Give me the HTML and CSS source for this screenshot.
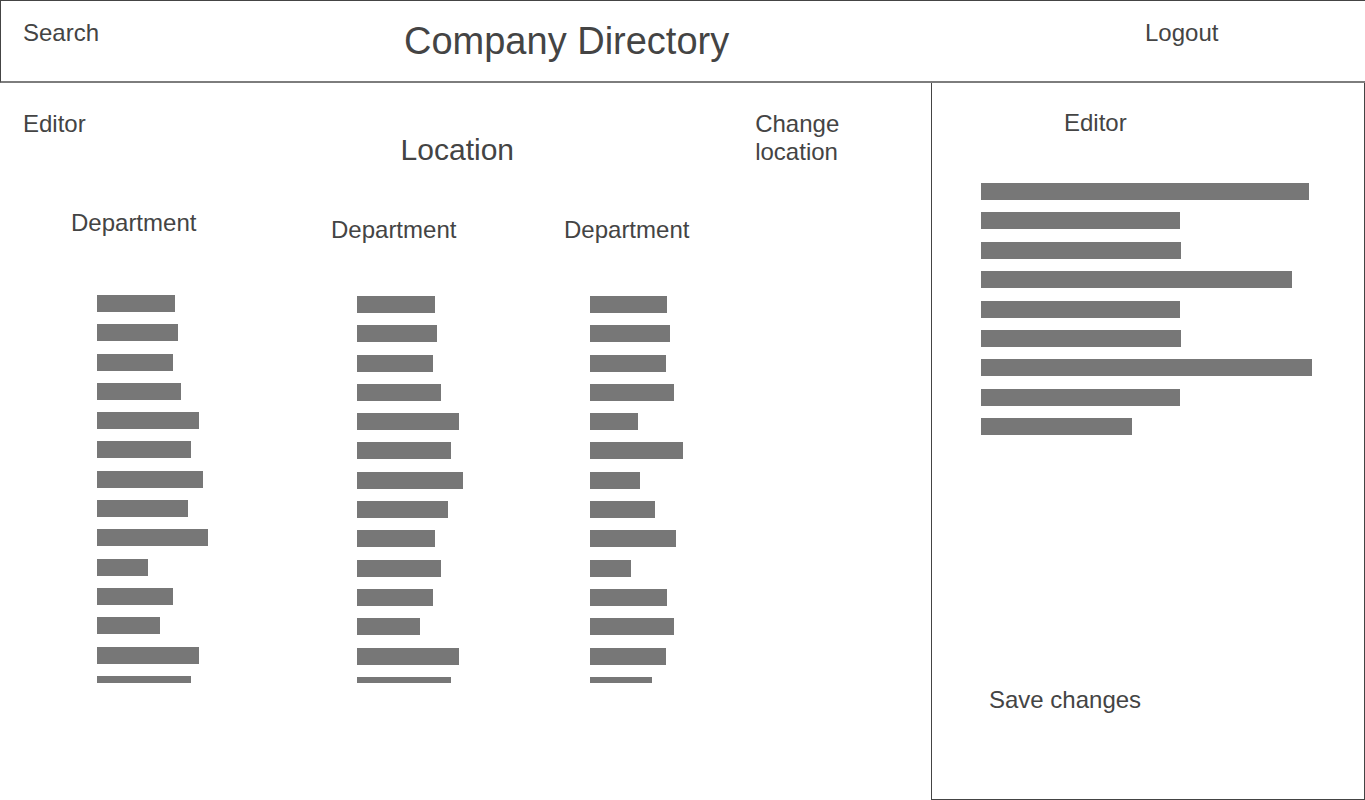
FILE: index.html
```html
<!DOCTYPE html>
<html lang="en">
<head>
<meta charset="utf-8">
<meta name="viewport" content="width=device-width, initial-scale=1">
<title>Company Directory</title>
<link rel="stylesheet" href="styles.css">
</head>
<body class="page">
<header class="topbar">
  <button class="action" type="button">Search</button>
  <h1 class="title">Company Directory</h1>
  <a class="action" href="#logout">Logout</a>
</header>
<div class="workspace">
  <main class="directory">
    <div class="location-bar">
      <button class="action" type="button">Editor</button>
      <h2 class="location">Location</h2>
      <button class="action action-wrap" type="button">Change location</button>
    </div>
    <div class="departments">
      <section class="department">
        <h3 class="department-name">Department</h3>
        <div class="people">
          <ul class="bars">
            <li class="bar" style="width:78px"></li>
            <li class="bar" style="width:81px"></li>
            <li class="bar" style="width:76px"></li>
            <li class="bar" style="width:84px"></li>
            <li class="bar" style="width:102px"></li>
            <li class="bar" style="width:94px"></li>
            <li class="bar" style="width:106px"></li>
            <li class="bar" style="width:91px"></li>
            <li class="bar" style="width:111px"></li>
            <li class="bar" style="width:51px"></li>
            <li class="bar" style="width:76px"></li>
            <li class="bar" style="width:63px"></li>
            <li class="bar" style="width:102px"></li>
            <li class="bar" style="width:94px"></li>
          </ul>
        </div>
      </section>
      <section class="department department-low">
        <h3 class="department-name">Department</h3>
        <div class="people">
          <ul class="bars">
            <li class="bar" style="width:78px"></li>
            <li class="bar" style="width:80px"></li>
            <li class="bar" style="width:76px"></li>
            <li class="bar" style="width:84px"></li>
            <li class="bar" style="width:102px"></li>
            <li class="bar" style="width:94px"></li>
            <li class="bar" style="width:106px"></li>
            <li class="bar" style="width:91px"></li>
            <li class="bar" style="width:78px"></li>
            <li class="bar" style="width:84px"></li>
            <li class="bar" style="width:76px"></li>
            <li class="bar" style="width:63px"></li>
            <li class="bar" style="width:102px"></li>
            <li class="bar" style="width:94px"></li>
          </ul>
        </div>
      </section>
      <section class="department department-low">
        <h3 class="department-name">Department</h3>
        <div class="people">
          <ul class="bars">
            <li class="bar" style="width:77px"></li>
            <li class="bar" style="width:80px"></li>
            <li class="bar" style="width:76px"></li>
            <li class="bar" style="width:84px"></li>
            <li class="bar" style="width:48px"></li>
            <li class="bar" style="width:93px"></li>
            <li class="bar" style="width:50px"></li>
            <li class="bar" style="width:65px"></li>
            <li class="bar" style="width:86px"></li>
            <li class="bar" style="width:41px"></li>
            <li class="bar" style="width:77px"></li>
            <li class="bar" style="width:84px"></li>
            <li class="bar" style="width:76px"></li>
            <li class="bar" style="width:62px"></li>
          </ul>
        </div>
      </section>
    </div>
  </main>
  <aside class="editor">
    <h2 class="editor-title">Editor</h2>
    <ul class="bars editor-bars">
      <li class="bar" style="width:328px"></li>
      <li class="bar" style="width:199px"></li>
      <li class="bar" style="width:200px"></li>
      <li class="bar" style="width:311px"></li>
      <li class="bar" style="width:199px"></li>
      <li class="bar" style="width:200px"></li>
      <li class="bar" style="width:331px"></li>
      <li class="bar" style="width:199px"></li>
      <li class="bar" style="width:151px"></li>
    </ul>
    <button class="action save" type="button">Save changes</button>
  </aside>
</div>
</body>
</html>
```
FILE: styles.css
```css
*,
*::before,
*::after {
  box-sizing: border-box;
}

.page {
  display: flex;
  flex-direction: column;
  min-height: 100vh;
  margin: 0;
  background: #fff;
  color: #444;
  font-family: "Liberation Sans", Arial, sans-serif;
  font-size: 24px;
  line-height: 28px;
}

h1,
h2,
h3,
ul {
  margin: 0;
  padding: 0;
  font-weight: 400;
}

.action {
  justify-self: start;
  padding: 0;
  border: 0;
  background: none;
  color: inherit;
  font: inherit;
  text-align: left;
  text-decoration: none;
  cursor: pointer;
}

.topbar {
  display: grid;
  grid-template-columns: 381fr 741fr 220fr;
  align-items: start;
  padding: 18px 0 18px 22px;
  border: solid #444;
  border-width: 1px 0 0 1px;
  border-bottom: 2px solid #7d7d7d;
}

.title {
  font-size: 38px;
  line-height: 44px;
}

.workspace {
  display: grid;
  flex: 1;
  grid-template-columns: 931fr 434fr;
}

.directory {
  padding: 27px 0 20px;
}

.location-bar {
  display: grid;
  grid-template-columns: 378fr 355fr 176fr;
  align-items: start;
  padding-left: 23px;
}

.location {
  align-self: end;
  font-size: 30px;
  line-height: 32px;
}

.action-wrap {
  max-width: 110px;
}

.departments {
  display: grid;
  grid-template-columns: 260fr 233fr 367fr;
  height: 474px;
  margin-top: 43px;
  padding-left: 71px;
}

.department {
  display: flex;
  flex-direction: column;
  min-height: 0;
}

.department-name {
  padding-bottom: 58px;
  font-size: 24px;
}

.department-low {
  padding-top: 7px;
}

.department-low .department-name {
  padding-bottom: 52px;
}

.people {
  flex: 1;
  min-height: 0;
  margin-left: 26px;
  overflow: hidden;
}

.bars {
  display: flex;
  flex-direction: column;
  justify-content: space-between;
  height: 398px;
  list-style: none;
}

.bar {
  height: 17px;
  max-width: 100%;
  background: #777;
}

.editor {
  display: flex;
  flex-direction: column;
  align-items: flex-start;
  padding: 26px 49px 85px;
  border: solid #444;
  border-width: 0 1px 1px;
}

.editor-title {
  margin-left: 83px;
  font-size: 24px;
}

.editor-bars {
  width: 100%;
  height: 252px;
  margin: 46px 0;
}

.save {
  margin-top: auto;
  margin-left: 8px;
}
```
